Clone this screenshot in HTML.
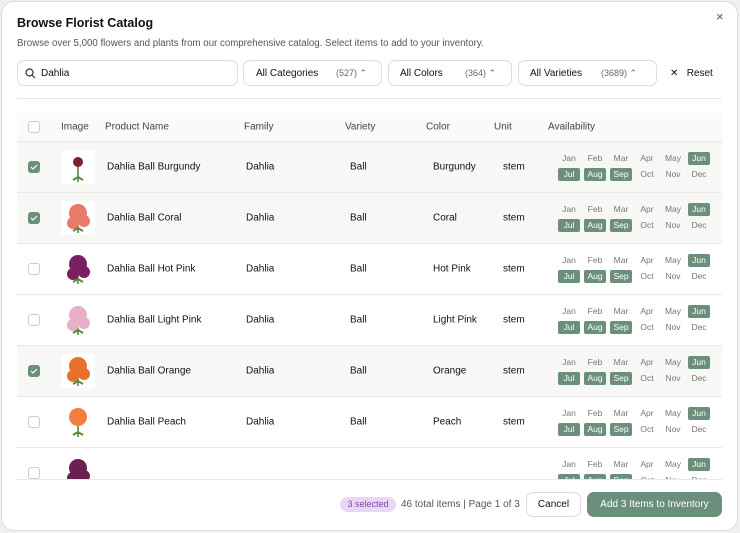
<!DOCTYPE html>
<html><head><style>
*{box-sizing:border-box;margin:0;padding:0}
body{width:740px;height:533px;background:#f0f0f0;font-family:"Liberation Sans",sans-serif;color:#111;position:relative;overflow:hidden}
.modal{position:absolute;left:1px;top:1px;width:737px;height:530px;background:#fff;border:1px solid #ddd;border-radius:13px;overflow:hidden}
.abs{position:absolute}
h1{position:absolute;left:15px;top:14px;font-size:12.5px;font-weight:bold}
.sub{left:15px;top:36px;font-size:9.7px;color:#555}
.box{position:absolute;top:58px;height:26px;border:1px solid #ddd;border-radius:7px;font-size:10px;display:flex;align-items:center}
.cnt{color:#666;font-size:9px;position:absolute}
.table{position:absolute;left:15px;top:111px;width:705px;height:367px;overflow:hidden}
.hdr{height:29px;background:#fafaf8;border-bottom:1px solid #e6e6e6;position:relative;font-size:10px;color:#444}
.row{height:51px;border-bottom:1px solid #e8e8e8;position:relative;font-size:10px}
.row.sel{background:#f7f7f5}
.c{position:absolute;top:50%;transform:translateY(-50%)}
.cb{position:absolute;left:11px;top:50%;margin-top:-6px;width:12px;height:12px;border:1px solid #ccc;border-radius:3px;background:#fff}
.cb.on{background:#6b8f7b;border-color:#6b8f7b}
.img{position:absolute;left:44px;top:8px;width:34px;height:34px;background:#fff;border-radius:3px}
.m{position:absolute;width:22px;height:13px;font-size:8.5px;color:#777;text-align:center;line-height:13px;border-radius:2px}
.m.on{background:#6b8f7b;color:#fff}
</style></head><body>
<div class="modal">
<h1>Browse Florist Catalog</h1>
<div class="abs sub">Browse over 5,000 flowers and plants from our comprehensive catalog. Select items to add to your inventory.</div>
<div class="abs" style="left:714px;top:7px;font-size:13px;color:#555">×</div>
<div class="box" style="left:15px;width:221px">
<svg class="abs" style="left:7px;top:7px" width="11" height="11" viewBox="0 0 11 11"><circle cx="4.5" cy="4.5" r="3.5" fill="none" stroke="#333" stroke-width="1.2"/><path d="M7 7l3 3" stroke="#333" stroke-width="1.2"/></svg>
<span style="position:absolute;left:23px">Dahlia</span></div>
<div class="box" style="left:241px;width:139px"><span style="position:absolute;left:12px">All Categories</span><span class="cnt" style="left:92px">(527) ⌃</span></div>
<div class="box" style="left:386px;width:124px"><span style="position:absolute;left:11px">All Colors</span><span class="cnt" style="left:76px">(364) ⌃</span></div>
<div class="box" style="left:516px;width:139px"><span style="position:absolute;left:11px">All Varieties</span><span class="cnt" style="left:82px">(3689) ⌃</span></div>
<div class="abs" style="left:668px;top:66px;font-size:10px">✕&nbsp;&nbsp;&nbsp;Reset</div>
<div class="abs" style="left:15px;top:96px;width:705px;height:1px;background:#e8e8e8"></div>
<div class="table">
<div class="hdr"><div class="cb" style="margin-top:-6px"></div>
<span class="c" style="left:44px">Image</span><span class="c" style="left:88px">Product Name</span><span class="c" style="left:227px">Family</span><span class="c" style="left:328px">Variety</span><span class="c" style="left:409px">Color</span><span class="c" style="left:477px">Unit</span><span class="c" style="left:531px">Availability</span></div>
<div id="rows"></div>
</div>
<div class="abs" style="left:15px;top:477px;width:705px;height:1px;background:#e8e8e8"></div>
<div class="abs" style="left:338px;top:495px;width:56px;height:15px;border-radius:8px;background:#ead7f7;color:#7a4a9a;font-size:9px;text-align:center;line-height:15px">3 selected</div>
<div class="abs" style="left:399px;top:497px;font-size:10px;color:#555">46 total items | Page 1 of 3</div>
<div class="abs" style="left:524px;top:490px;width:55px;height:25px;border:1px solid #ddd;border-radius:7px;font-size:10px;text-align:center;line-height:23px">Cancel</div>
<div class="abs" style="left:585px;top:490px;width:135px;height:25px;background:#6b8f7b;border-radius:7px;color:#fff;font-size:10px;text-align:center;line-height:25px">Add 3 Items to Inventory</div>
</div>
<script>
var d=[["Burgundy",1,"#7a1f3a"],["Coral",1,"#e87a6a"],["Hot Pink",0,"#7a2060"],["Light Pink",0,"#e8b0c8"],["Orange",1,"#e8702a"],["Peach",0,"#f08040"],["Scarlet",0,"#6a2050"]];
var ms=["Jan","Feb","Mar","Apr","May","Jun","Jul","Aug","Sep","Oct","Nov","Dec"],on=[5,6,7,8];
var h="";
d.forEach(function(r,i){
h+='<div class="row'+(r[1]?' sel':'')+'"><div class="cb'+(r[1]?' on':'')+'">'+(r[1]?'<svg width="10" height="10" viewBox="0 0 10 10" style="position:absolute;left:0;top:0"><path d="M2 5l2 2 4-4" stroke="#fff" fill="none" stroke-width="1.2"/></svg>':'')+'</div>';
h+='<div class="img"><svg width="34" height="34"><path d="M17 14v18" stroke="#5a7a3a" stroke-width="1.5"/><circle cx="17" cy="12" r="'+(i==0?5:9)+'" fill="'+r[2]+'"/><circle cx="12" cy="22" r="'+(i==0||i==5?0:6)+'" fill="'+r[2]+'"/><circle cx="23" cy="20" r="'+(i==0||i==5?0:6)+'" fill="'+r[2]+'"/><path d="M12 30l5-3 5 3" stroke="#5a8a3a" fill="none" stroke-width="2"/></svg></div>';
if(i<6){h+='<span class="c" style="left:90px">Dahlia Ball '+r[0]+'</span><span class="c" style="left:229px">Dahlia</span><span class="c" style="left:333px">Ball</span><span class="c" style="left:416px">'+r[0]+'</span><span class="c" style="left:486px">stem</span>';}
ms.forEach(function(m,k){var x=541+(k%6)*26,y=k<6?10:26;h+='<div class="m'+(on.indexOf(k)>=0?' on':'')+'" style="left:'+x+'px;top:'+y+'px">'+m+'</div>';});
h+='</div>';});
document.getElementById("rows").innerHTML=h;
</script>
</body></html>
